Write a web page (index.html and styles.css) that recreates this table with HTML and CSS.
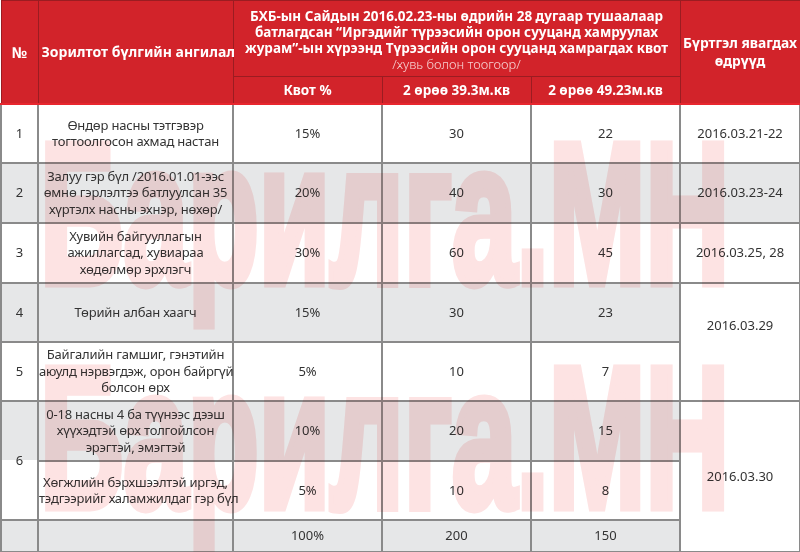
FILE: index.html
```html
<!DOCTYPE html>
<html lang="mn">
<head>
<meta charset="utf-8">
<title>Квот</title>
<link rel="stylesheet" href="styles.css">
</head>
<body>
<div class="sheet">
  <table class="quota">
    <colgroup>
      <col class="c-no"><col class="c-cat"><col class="c-q"><col class="c-q"><col class="c-q"><col class="c-date">
    </colgroup>
    <thead>
      <tr class="h1">
        <th rowspan="2" class="no">№</th>
        <th rowspan="2" class="cat">Зорилтот бүлгийн ангилал</th>
        <th colspan="3" class="title">БХБ-ын Сайдын 2016.02.23-ны өдрийн 28 дугаар тушаалаар<br>батлагдсан “Иргэдийг түрээсийн орон сууцанд хамруулах<br>журам”-ын хүрээнд Түрээсийн орон сууцанд хамрагдах квот<br><span class="sub">/хувь болон тоогоор/</span></th>
        <th rowspan="2" class="dates">Бүртгэл явагдах<br>өдрүүд</th>
      </tr>
      <tr class="h2">
        <th>Квот %</th>
        <th>2 өрөө 39.3м.кв</th>
        <th>2 өрөө 49.23м.кв</th>
      </tr>
    </thead>
    <tbody>
      <tr class="r59">
        <td class="no">1</td>
        <td class="cat">Өндөр насны тэтгэвэр<br>тогтоолгосон ахмад настан</td>
        <td>15%</td><td>30</td><td>22</td>
        <td>2016.03.21-22</td>
      </tr>
      <tr class="r60 alt">
        <td class="no">2</td>
        <td class="cat">Залуу гэр бүл /2016.01.01-ээс<br>өмнө гэрлэлтээ батлуулсан 35<br>хүртэлх насны эхнэр, нөхөр/</td>
        <td>20%</td><td>40</td><td>30</td>
        <td>2016.03.23-24</td>
      </tr>
      <tr class="r60">
        <td class="no">3</td>
        <td class="cat">Хувийн байгууллагын<br>ажиллагсад, хувиараа<br>хөдөлмөр эрхлэгч</td>
        <td>30%</td><td>60</td><td>45</td>
        <td>2016.03.25, 28</td>
      </tr>
      <tr class="r59 alt">
        <td class="no">4</td>
        <td class="cat">Төрийн албан хаагч</td>
        <td>15%</td><td>30</td><td>23</td>
        <td rowspan="2" class="date-hi">2016.03.29</td>
      </tr>
      <tr class="r59">
        <td class="no">5</td>
        <td class="cat">Байгалийн гамшиг, гэнэтийн<br>аюулд нэрвэгдэж, орон байргүй<br>болсон өрх</td>
        <td>5%</td><td>10</td><td>7</td>
      </tr>
      <tr class="r60 alt">
        <td rowspan="2" class="no split">6</td>
        <td class="cat">0-18 насны 4 ба түүнээс дээш<br>хүүхэдтэй өрх толгойлсон<br>эрэгтэй, эмэгтэй</td>
        <td>10%</td><td>20</td><td>15</td>
        <td rowspan="3" class="date-w">2016.03.30</td>
      </tr>
      <tr class="r59">
        <td class="cat">Хөгжлийн бэрхшээлтэй иргэд,<br>тэдгээрийг халамжилдаг гэр бүл</td>
        <td>5%</td><td>10</td><td>8</td>
      </tr>
      <tr class="r32 alt">
        <td class="no"></td>
        <td class="cat"></td>
        <td>100%</td><td>200</td><td>150</td>
      </tr>
    </tbody>
  </table>
  <div class="wm wm-1" aria-hidden="true">Барилга.МН</div>
  <div class="wm wm-2" aria-hidden="true">Барилга.МН</div>
</div>
</body>
</html>
```
FILE: styles.css
```css
body {
  margin: 0;
  background: #ffffff;
}

.sheet {
  position: relative;
  width: 800px;
  height: 552px;
  overflow: hidden;
}

.quota {
  border-collapse: collapse;
  table-layout: fixed;
  width: 799px;
  font-family: "Noto Sans", "DejaVu Sans", sans-serif;
  font-size: 13px;
  color: #333333;
}

.c-no { width: 37px; }
.c-cat { width: 195px; }
.c-q { width: 149px; }
.c-date { width: 120px; }

.quota th {
  background: #d2232a;
  color: #ffffff;
  font-weight: 700;
  font-size: 13.5px;
  line-height: 16px;
  border: 1px solid #9b1c21;
  padding: 0;
  text-align: center;
  vertical-align: middle;
}

.quota tr.h1 { height: 76px; }
.quota tr.h2 { height: 27px; }

.quota th.cat {
  text-align: left;
  padding-left: 3px;
  white-space: nowrap;
  font-size: 14px;
}

.quota th.no { font-size: 15px; }

.quota th.title {
  white-space: nowrap;
  padding-top: 2px;
}

.quota th.dates { line-height: 18px; font-size: 13.8px; }

.quota .sub {
  font-weight: 300;
  color: #f7d2d2;
  font-size: 13px;
}

.quota tr.h2 th,
.quota th.no,
.quota th.cat,
.quota th.dates {
  border-bottom: 2px solid #e8262e;
}

.quota td {
  border: 2px solid #8a8a8a;
  padding: 0;
  text-align: center;
  vertical-align: middle;
  line-height: 16.5px;
  background: #ffffff;
}

.quota tbody tr:first-child td { border-top: none; }

.quota tr.alt td { background: #e6e7e8; }

.quota tr.r59 { height: 59px; }
.quota tr.r60 { height: 60px; }
.quota tr.r32 { height: 32px; }

.quota td.cat {
  white-space: nowrap;
  letter-spacing: -0.2px;
}

.quota tr.alt td.split {
  background: linear-gradient(#e6e7e8 0 50%, #ffffff 50% 100%);
}

.quota td.date-hi { padding-bottom: 32px; }
.quota tr.alt td.date-hi,
.quota tr.alt td.date-w { background: #ffffff; }

.wm {
  position: absolute;
  left: 40px;
  font-family: "Liberation Sans", Arial, sans-serif;
  font-weight: 700;
  font-size: 200px;
  line-height: 1;
  white-space: nowrap;
  color: #fde3e3;
  -webkit-text-stroke: 9px #fde3e3;
  mix-blend-mode: multiply;
  transform-origin: left top;
  transform: scale(0.58, 1);
  pointer-events: none;
  user-select: none;
}

.wm-1 { top: 114px; }
.wm-2 { top: 338px; }
```
